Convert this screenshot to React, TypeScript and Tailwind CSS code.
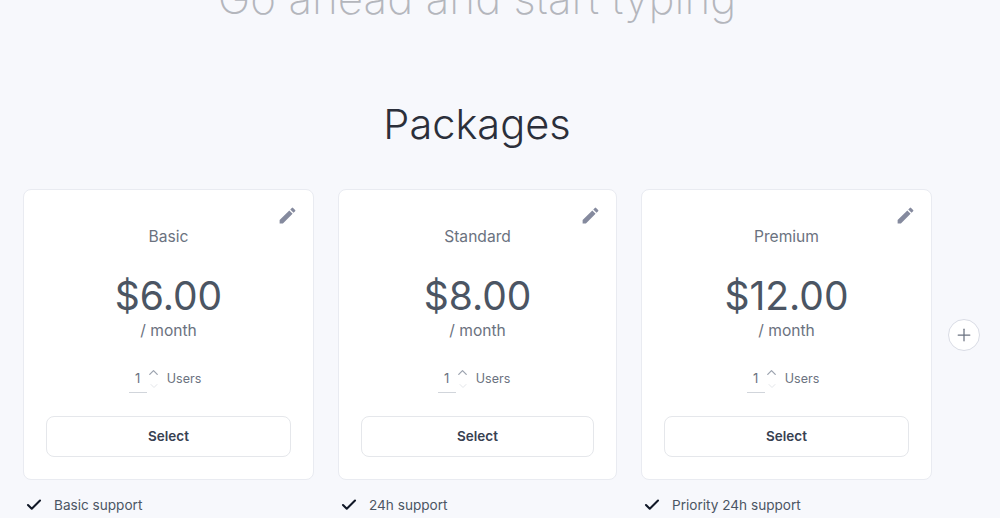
import { Check, ChevronDown, ChevronUp, Plus } from 'lucide-react';
import { MdEdit } from 'react-icons/md';

const packages = [
  { name: 'Basic', price: '$6.00', feature: 'Basic support', width: 'w-[291px]' },
  { name: 'Standard', price: '$8.00', feature: '24h support', width: 'w-[279px]' },
  { name: 'Premium', price: '$12.00', feature: 'Priority 24h support', width: 'w-[291px]' },
];

function PackageCard({ name, price, feature, width }: (typeof packages)[number]) {
  return (
    <div className={`${width} shrink-0`}>
      <div className="relative h-[291px] rounded-lg border border-[#e9ebf1] bg-white px-[22px] pt-[37px] text-center">
        {/* Edit pencil */}
        <button className="absolute right-[15px] top-[15px] text-[#858a9e]">
          <MdEdit size={21} />
        </button>

        <div className="text-[15.6px] leading-5 text-[#6b7280]">{name}</div>
        <div className="mt-[25px] text-[39px] leading-[48px] text-[#4b5563]">{price}</div>
        <div className="mt-[1px] text-[15.6px] leading-5 text-[#6b7280]">/ month</div>

        {/* Users stepper */}
        <div className="mt-[25px] flex h-[28px] items-start justify-center pr-[7px]">
          <div className="mt-[1px] w-[18px] border-b border-[#d1d5db] pb-[3px] text-center text-[13px] leading-[22px] text-[#6b7280]">1</div>
          <div className="ml-[1px] -mt-[1px] flex w-[12px] flex-col items-center">
            <ChevronUp size={15} strokeWidth={2} className="text-[#9ca3af]" />
            <ChevronDown size={12} strokeWidth={1.5} className="text-[#d9dce2]" />
          </div>
          <div className="ml-[7px] mt-[4px] text-[12.5px] leading-[18px] text-[#6b7280]">Users</div>
        </div>

        <button className="mt-[22px] h-[41px] w-full rounded-lg border border-[#e5e7eb] bg-white text-[13.5px] font-semibold text-[#374151]">
          Select
        </button>
      </div>

      <div className="mt-[15px] flex items-center gap-[11px] pl-[2px] text-[13.6px] leading-5 text-[#4b5563]">
        <Check size={18} strokeWidth={2.75} className="text-[#111827]" />
        <span>{feature}</span>
      </div>
    </div>
  );
}

export default function App() {
  return (
    <div className="h-[518px] w-[1000px] overflow-hidden bg-[#f7f8fc] font-['Inter',sans-serif]">
      <h2 className="-mt-[26px] ml-[-46px] text-center text-[44px] font-extralight leading-[48px] text-[#b4b6bc]">
        Go ahead and start typing
      </h2>

      <h1 className="mt-[77px] ml-[-46px] text-center text-[41.5px] font-light leading-[50px] text-[#2b2f3a]">
        Packages
      </h1>

      <div className="mt-[40px] flex items-start gap-[24px] pl-[23px]">
        {packages.map((p) => (
          <PackageCard key={p.name} {...p} />
        ))}
        <button className="-ml-[8px] mt-[130px] flex h-[32px] w-[32px] shrink-0 items-center justify-center rounded-full border border-[#d9dce5] bg-white text-[#6b7280]">
          <Plus size={20} strokeWidth={1.5} />
        </button>
      </div>
    </div>
  );
}
